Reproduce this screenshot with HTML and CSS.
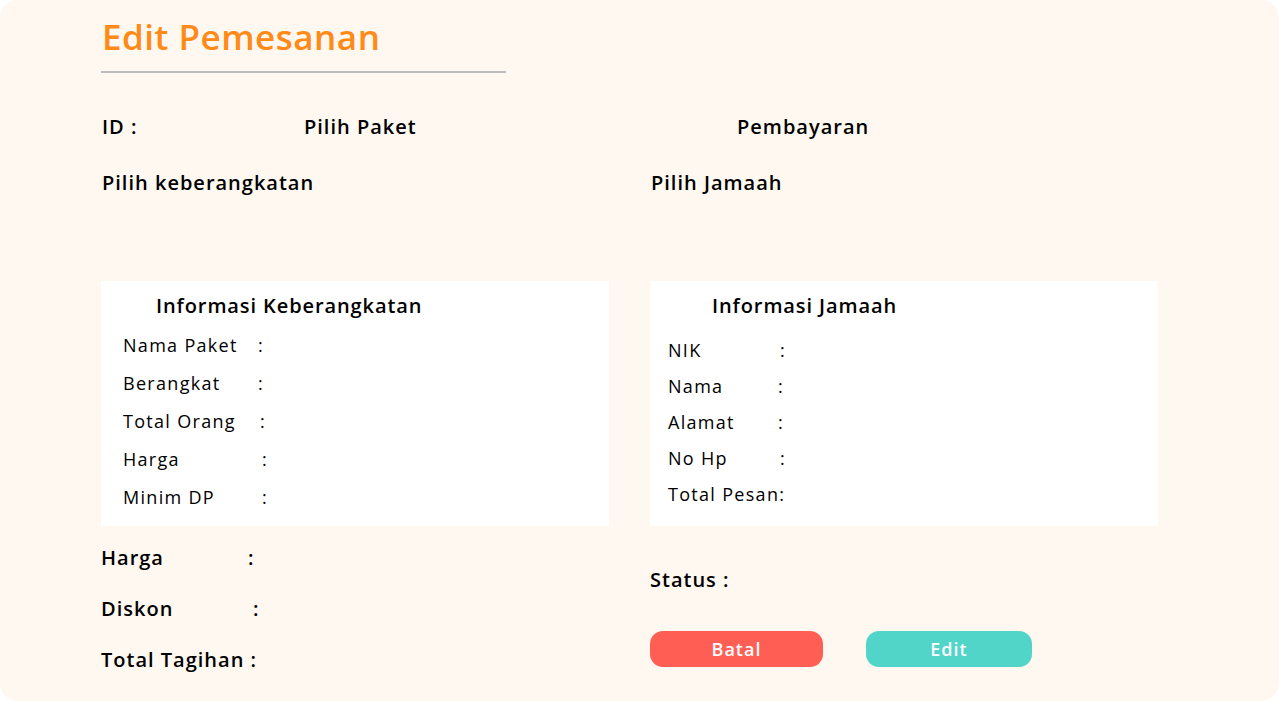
FILE: index.html
```html
<!DOCTYPE html>
<html lang="id">
<head>
<meta charset="utf-8">
<title>Edit Pemesanan</title>
<link rel="stylesheet" href="styles.css">
</head>
<body>
<main class="card">
  <header class="head">
    <h1 class="title">Edit Pemesanan</h1>
  </header>

  <div class="row-top">
    <span class="f-id">ID :</span>
    <span class="f-paket">Pilih Paket</span>
    <span class="f-bayar">Pembayaran</span>
  </div>

  <div class="row-second">
    <span class="f-keb">Pilih keberangkatan</span>
    <span class="f-jam">Pilih Jamaah</span>
  </div>

  <div class="columns">
    <section class="col">
      <div class="panel panel-left">
        <h2 class="panel-title">Informasi Keberangkatan</h2>
        <div class="info-list info-left">
          <div class="info-row"><span class="lab">Nama Paket</span><span class="col-sep">:</span></div>
          <div class="info-row"><span class="lab">Berangkat</span><span class="col-sep">:</span></div>
          <div class="info-row"><span class="lab">Total Orang</span><span class="col-sep s2">:</span></div>
          <div class="info-row"><span class="lab">Harga</span><span class="col-sep s4">:</span></div>
          <div class="info-row"><span class="lab">Minim DP</span><span class="col-sep s4">:</span></div>
        </div>
      </div>
      <div class="totals">
        <div class="tot-row"><span class="tlab w1">Harga</span><span>:</span></div>
        <div class="tot-row"><span class="tlab w2">Diskon</span><span>:</span></div>
        <div class="tot-row"><span class="tlab">Total Tagihan :</span></div>
      </div>
    </section>

    <section class="col">
      <div class="panel panel-right">
        <h2 class="panel-title">Informasi Jamaah</h2>
        <div class="info-list info-right">
          <div class="info-row"><span class="lab">NIK</span><span class="col-sep s2">:</span></div>
          <div class="info-row"><span class="lab">Nama</span><span class="col-sep">:</span></div>
          <div class="info-row"><span class="lab">Alamat</span><span class="col-sep">:</span></div>
          <div class="info-row"><span class="lab">No Hp</span><span class="col-sep s2">:</span></div>
          <div class="info-row"><span class="lab wide">Total Pesan:</span></div>
        </div>
      </div>
      <div class="status">Status :</div>
      <div class="actions">
        <button class="btn btn-cancel" type="button">Batal</button>
        <button class="btn btn-edit" type="button">Edit</button>
      </div>
    </section>
  </div>
</main>
</body>
</html>
```

FILE: styles.css
```css
* { box-sizing: border-box; }

html, body {
  margin: 0;
  padding: 0;
  background: #ffffff;
}

body {
  font-family: "Open Sans", "Noto Sans", sans-serif;
  color: #000;
}

.card {
  width: 1279px;
  height: 701px;
  background: #fef8f1;
  border-radius: 18px;
  padding: 0 0 0 101px;
  overflow: hidden;
}

.head {
  width: 405px;
  border-bottom: 2px solid #bdbdbd;
  padding-top: 16px;
  height: 73px;
}

.title {
  margin: 0;
  font-size: 35px;
  line-height: 42px;
  font-weight: 600;
  color: #ff8a17;
  padding-left: 1px;
  letter-spacing: 0.5px;
}

.row-top {
  display: grid;
  grid-template-columns: 202px 433px auto;
  margin-top: 40px;
  height: 28px;
  line-height: 28px;
  font-size: 20px;
  font-weight: 600;
  letter-spacing: 1px;
  padding-left: 1px;
}

.row-second {
  display: grid;
  grid-template-columns: 549px auto;
  margin-top: 28px;
  height: 28px;
  line-height: 28px;
  font-size: 20px;
  font-weight: 600;
  letter-spacing: 1px;
  padding-left: 1px;
}

.columns {
  display: grid;
  grid-template-columns: 508px 508px;
  column-gap: 41px;
  margin-top: 84px;
}

.panel {
  background: #ffffff;
  height: 245px;
  padding-top: 10px;
}

.panel-title {
  margin: 0;
  font-size: 20px;
  line-height: 30px;
  font-weight: 600;
  letter-spacing: 0.9px;
}

.panel-left .panel-title { padding-left: 55px; }
.panel-right .panel-title { padding-left: 62px; }

.info-list {
  font-size: 18px;
  font-weight: 400;
  letter-spacing: 1.3px;
}

.info-left {
  padding-left: 22px;
  margin-top: 5px;
}

.info-left .info-row {
  display: flex;
  height: 38px;
  line-height: 38px;
}

.info-left .lab { width: 135px; }

.info-right {
  padding-left: 18px;
  margin-top: 11px;
}

.info-right .info-row {
  display: flex;
  height: 36px;
  line-height: 36px;
}

.info-right .lab { width: 110px; }
.info-right .lab.wide { width: auto; }

.col-sep.s2 { padding-left: 2px; }
.col-sep.s4 { padding-left: 4px; }

.totals {
  margin-top: 6px;
  font-size: 20px;
  font-weight: 600;
  letter-spacing: 1px;
}

.tot-row {
  display: flex;
  height: 51px;
  line-height: 51px;
}

.tlab.w1 { width: 147px; }
.tlab.w2 { width: 152px; }

.status {
  margin-top: 40px;
  font-size: 20px;
  font-weight: 600;
  line-height: 28px;
  letter-spacing: 1px;
}

.actions {
  display: flex;
  gap: 43px;
  margin-top: 37px;
}

.btn {
  border: 0;
  height: 36px;
  border-radius: 13px;
  color: #ffffff;
  font-family: inherit;
  font-size: 18px;
  font-weight: 600;
  letter-spacing: 1px;
  padding: 0;
  cursor: pointer;
}

.btn-cancel {
  width: 173px;
  background: #ff5e55;
}

.btn-edit {
  width: 166px;
  background: #50d5c8;
}
```
